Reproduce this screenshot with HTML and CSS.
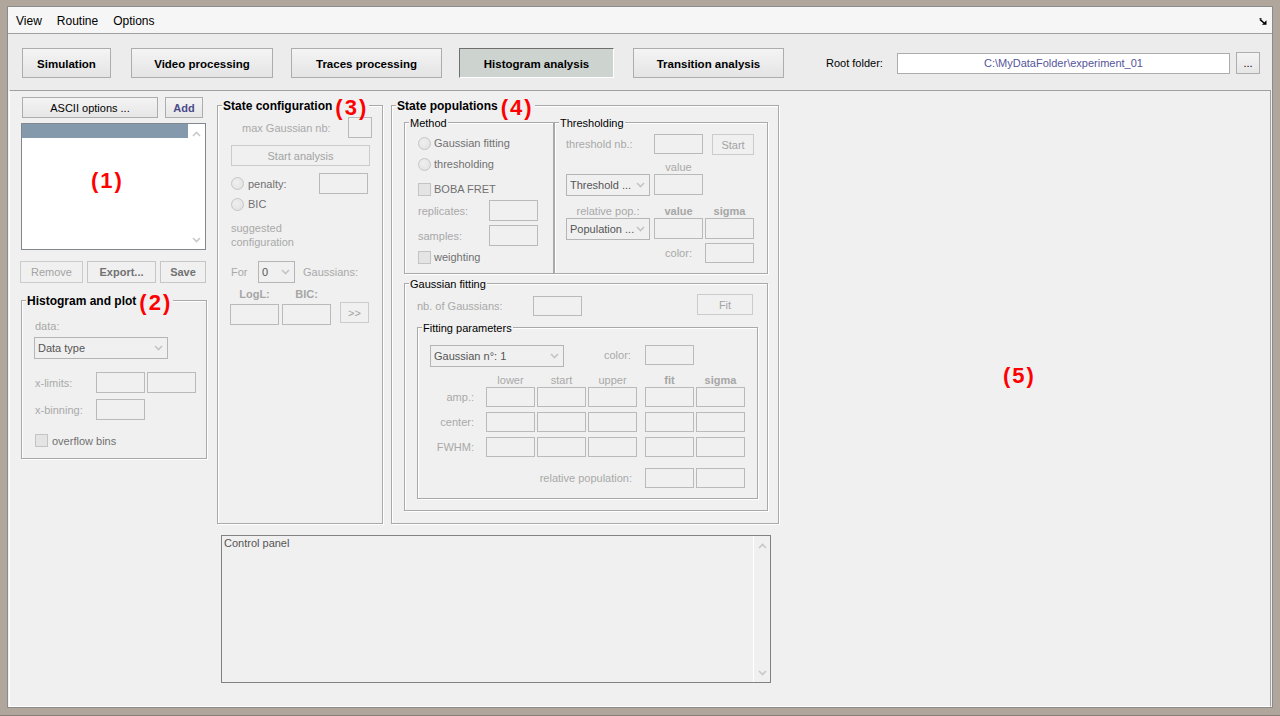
FILE: index.html
```html
<!DOCTYPE html>
<html lang="en">
<head>
<meta charset="utf-8">
<title>Histogram analysis</title>
<link rel="stylesheet" href="styles.css">
</head>
<body>
<div class="window">
  <div class="menubar">
    <span>View</span><span>Routine</span><span>Options</span>
    <svg class="undock" width="8" height="7" viewBox="0 0 8 7"><path d="M0.5 0.8 H2.5" stroke="#000" stroke-width="1.2"/><path d="M1.2 1.6 L5 5" stroke="#000" stroke-width="1.5" fill="none"/><path d="M7.5 2.2 V6.8 H2.9 Z" fill="#000"/></svg>
  </div>

  <div class="toolbar">
    <button class="tab tab-sim">Simulation</button>
    <button class="tab tab-vid">Video processing</button>
    <button class="tab tab-tr">Traces processing</button>
    <button class="tab tab-hist active">Histogram analysis</button>
    <button class="tab tab-trans">Transition analysis</button>
    <span class="root-label">Root folder:</span>
    <div class="root-input">C:\MyDataFolder\experiment_01</div>
    <button class="btn browse">...</button>
  </div>

  <div class="main">
    <div class="col-left">
      <div class="ascii-row">
        <button class="btn ascii-btn">ASCII options ...</button>
        <button class="btn add-btn">Add</button>
      </div>
      <div class="listbox">
        <div class="list-items"><div class="list-sel"></div></div>
        <div class="list-scroll">
          <svg width="9" height="6" viewBox="0 0 9 6"><path d="M1 5l3.5-3.5L8 5" fill="none" stroke="#c8c8c8" stroke-width="1.6"/></svg>
          <svg width="9" height="6" viewBox="0 0 9 6"><path d="M1 1l3.5 3.5L8 1" fill="none" stroke="#c8c8c8" stroke-width="1.6"/></svg>
        </div>
        <span class="mark mark1">(1)</span>
      </div>
      <div class="action-row">
        <button class="btn off rm-btn">Remove</button>
        <button class="btn off-bold exp-btn">Export...</button>
        <button class="btn off-bold save-btn">Save</button>
      </div>

      <div class="grp grp-hist">
        <div class="grp-title bold">Histogram and plot<span class="mark">(2)</span></div>
        <div class="lbl h-data">data:</div>
        <div class="sel h-sel"><span>Data type</span><svg width="9" height="6" viewBox="0 0 9 6"><path d="M1 1l3.5 3.5L8 1" fill="none" stroke="#c4c4c4" stroke-width="1.6"/></svg></div>
        <div class="frow h-xl"><span class="lbl h-lab">x-limits:</span><div class="fld"></div><div class="fld ml2"></div></div>
        <div class="frow h-xb"><span class="lbl h-lab">x-binning:</span><div class="fld"></div></div>
        <div class="frow h-ov"><div class="chk"></div><span class="mid">overflow bins</span></div>
      </div>
    </div>

    <div class="col-right">
      <div class="panels">
        <div class="grp grp-state">
          <div class="grp-title bold">State configuration<span class="mark">(3)</span></div>
          <div class="frow s-max"><span class="lbl">max Gaussian nb:</span><div class="fld"></div></div>
          <button class="btn off s-start">Start analysis</button>
          <div class="frow s-pen"><div class="radio"></div><span class="mid txt">penalty:</span><div class="fld"></div></div>
          <div class="frow s-bic"><div class="radio"></div><span class="mid txt">BIC</span></div>
          <div class="lbl s-sugg">suggested<br>configuration</div>
          <div class="frow s-for"><span class="lbl for">For</span><div class="sel for-sel"><span>0</span><svg width="9" height="6" viewBox="0 0 9 6"><path d="M1 1l3.5 3.5L8 1" fill="none" stroke="#c4c4c4" stroke-width="1.6"/></svg></div><span class="lbl gauss">Gaussians:</span></div>
          <div class="s-head"><span class="hb">LogL:</span><span class="hb ml3">BIC:</span></div>
          <div class="s-res"><div class="fld"></div><div class="fld ml3"></div><button class="btn off s-more">&gt;&gt;</button></div>
        </div>

        <div class="grp grp-pop">
          <div class="grp-title bold">State populations<span class="mark">(4)</span></div>
          <div class="pop-top">
            <div class="grp grp-method">
              <div class="grp-title">Method</div>
              <div class="frow m-r1"><div class="radio"></div><span class="mid txt">Gaussian fitting</span></div>
              <div class="frow m-r2"><div class="radio"></div><span class="mid txt">thresholding</span></div>
              <div class="frow m-cb"><div class="chk"></div><span class="mid txt">BOBA FRET</span></div>
              <div class="frow m-rep"><span class="lbl m-lab">replicates:</span><div class="fld"></div></div>
              <div class="frow m-rep"><span class="lbl m-lab">samples:</span><div class="fld"></div></div>
              <div class="frow m-wt"><div class="chk"></div><span class="mid txt">weighting</span></div>
            </div>
            <div class="grp grp-thr">
              <div class="grp-title">Thresholding</div>
              <div class="frow t-r1"><span class="lbl t-lab">threshold nb.:</span><div class="fld h20"></div><button class="btn off t-start">Start</button></div>
              <div class="t-h1"><span class="lbl cell">value</span></div>
              <div class="frow t-r2"><div class="sel t-sel"><span>Threshold ...</span><svg width="9" height="6" viewBox="0 0 9 6"><path d="M1 1l3.5 3.5L8 1" fill="none" stroke="#c4c4c4" stroke-width="1.6"/></svg></div><div class="fld c2"></div></div>
              <div class="frow t-h2"><span class="lbl c1 center">relative pop.:</span><span class="hb c2 cell">value</span><span class="hb c3 cell">sigma</span></div>
              <div class="frow t-r2"><div class="sel t-sel"><span>Population ...</span><svg width="9" height="6" viewBox="0 0 9 6"><path d="M1 1l3.5 3.5L8 1" fill="none" stroke="#c4c4c4" stroke-width="1.6"/></svg></div><div class="fld c2"></div><div class="fld c3"></div></div>
              <div class="frow t-r4"><span class="lbl cell">color:</span><div class="fld h20 c3"></div></div>
            </div>
          </div>

          <div class="grp grp-gfit">
            <div class="grp-title">Gaussian fitting</div>
            <div class="frow g-r1"><span class="lbl g-lab">nb. of Gaussians:</span><div class="fld h20"></div><button class="btn off g-fit">Fit</button></div>
            <div class="grp grp-fp">
              <div class="grp-title">Fitting parameters</div>
              <div class="frow f-r1"><div class="sel f-sel"><span>Gaussian n°: 1</span><svg width="9" height="6" viewBox="0 0 9 6"><path d="M1 1l3.5 3.5L8 1" fill="none" stroke="#c4c4c4" stroke-width="1.6"/></svg></div><span class="lbl f-col">color:</span><div class="fld h20"></div></div>
              <div class="f-grid">
                <span></span><span class="lbl gh">lower</span><span class="lbl gh">start</span><span class="lbl gh">upper</span><span></span><span class="hb gh">fit</span><span class="hb gh">sigma</span>
                <span class="lbl gl">amp.:</span><div class="fld h20"></div><div class="fld h20"></div><div class="fld h20"></div><span></span><div class="fld h20"></div><div class="fld h20"></div>
                <span class="lbl gl">center:</span><div class="fld h20"></div><div class="fld h20"></div><div class="fld h20"></div><span></span><div class="fld h20"></div><div class="fld h20"></div>
                <span class="lbl gl">FWHM:</span><div class="fld h20"></div><div class="fld h20"></div><div class="fld h20"></div><span></span><div class="fld h20"></div><div class="fld h20"></div>
              </div>
              <div class="frow f-rel"><span class="lbl f-rel-lab">relative population:</span><div class="fld h20 f-rel-a"></div><div class="fld h20 ml2"></div></div>
            </div>
          </div>
        </div>
      </div>

      <div class="console">
        <div class="console-text">Control panel</div>
        <div class="console-scroll">
          <svg width="9" height="6" viewBox="0 0 9 6"><path d="M1 5l3.5-3.5L8 5" fill="none" stroke="#c8c8c8" stroke-width="1.6"/></svg>
          <svg width="9" height="6" viewBox="0 0 9 6"><path d="M1 1l3.5 3.5L8 1" fill="none" stroke="#c8c8c8" stroke-width="1.6"/></svg>
        </div>
      </div>
    </div>

    <div class="plot">
      <span class="mark mark5">(5)</span>
    </div>
  </div>
</div>
</body>
</html>
```

FILE: styles.css
```css
* { box-sizing: border-box; }
html, body { margin: 0; padding: 0; }

body {
  width: 1280px;
  height: 716px;
  overflow: hidden;
  background: #b0a69c;
  padding: 6px 7px 8px 7px;
  font-family: "Liberation Sans", Arial, sans-serif;
  font-size: 11px;
  color: #000;
  box-shadow: inset 0 -1px 0 #857d76;
}

button {
  font-family: inherit;
  font-size: 11px;
  margin: 0;
  padding: 0;
}

.window {
  height: 702px;
  border: 1px solid #8b8b8b;
  background: #f0f0f0;
  display: flex;
  flex-direction: column;
}

/* menu */
.menubar {
  flex: none;
  height: 27px;
  background: #f6f6f6;
  border-bottom: 1px solid #a0a0a0;
  display: flex;
  align-items: center;
  gap: 15px;
  padding: 2px 4px 0 8px;
  font-size: 12px;
}
.undock { margin-left: auto; margin-right: 1px; }

/* toolbar */
.toolbar {
  flex: none;
  height: 56px;
  background: #ececec;
  display: flex;
  align-items: flex-start;
  padding: 14px 0 0 14px;
}
.tab {
  flex: none;
  height: 30px;
  padding-top: 2px;
  border: 1px solid #adadad;
  background: linear-gradient(#f4f4f4, #e4e4e4);
  font-weight: bold;
  font-size: 11.5px;
  color: #000;
}
.tab-sim { width: 89px; }
.tab-vid { width: 142px; margin-left: 20px; }
.tab-tr { width: 151px; margin-left: 18px; }
.tab-hist { width: 155px; margin-left: 17px; }
.tab-trans { width: 151px; margin-left: 19px; }
.tab.active {
  background: #cdd3cf;
  border-color: #6f6f6f #fff #fff #6f6f6f;
}
.root-label { margin: 8px 0 0 42px; line-height: 14px; width: 57px; white-space: nowrap; }
.root-input {
  margin: 5px 0 0 14px;
  width: 333px;
  height: 21px;
  background: #fff;
  border: 1px solid #acacac;
  color: #55559a;
  text-align: center;
  line-height: 19px;
}
.browse { margin: 4px 0 0 6px; width: 24px; height: 22px; }

/* generic controls */
.btn {
  display: flex;
  align-items: center;
  justify-content: center;
  border: 1px solid #adadad;
  background: linear-gradient(#f4f4f4, #e6e6e6);
  color: #000;
  flex: none;
}
.btn.off { border-color: #cbcbcb; background: #f0f0f0; color: #a3a3a3; }
.btn.off-bold { border-color: #c6c6c6; background: #f0f0f0; color: #727272; font-weight: bold; }

.fld {
  flex: none;
  width: 49px;
  height: 21px;
  border: 1px solid #bababa;
  background: #f0f0f0;
}
.fld.h20 { height: 20px; }
.ml2 { margin-left: 2px; }
.ml3 { margin-left: 3px; }

.sel {
  flex: none;
  display: flex;
  align-items: center;
  justify-content: space-between;
  border: 1px solid #b5b5b5;
  background: #f0f0f0;
  color: #555;
  padding: 0 4px 0 3px;
  white-space: nowrap;
}
.radio {
  flex: none;
  width: 13px;
  height: 13px;
  border-radius: 50%;
  border: 1px solid #c6c6c6;
  background: radial-gradient(circle at 40% 40%, #efefef, #e0e0e0);
}
.chk {
  flex: none;
  width: 13px;
  height: 13px;
  border: 1px solid #c4c4c4;
  background: #e4e4e4;
}
.lbl { color: #a9a9a9; line-height: 14px; white-space: nowrap; }
.mid { color: #707070; line-height: 14px; white-space: nowrap; }
.hb { color: #a6a6a6; font-weight: bold; line-height: 14px; white-space: nowrap; }
.txt { margin-left: 3px; }
.frow { display: flex; align-items: center; }
.cell { width: 49px; text-align: center; display: inline-block; }
.center { text-align: center; }

.grp {
  position: relative;
  flex: none;
  border: 1px solid #a9a9a9;
  box-shadow: inset 1px 1px 0 #fff, 1px 1px 0 #fff;
}
.grp-title {
  position: absolute;
  top: -7px;
  left: 4px;
  padding: 0 1px;
  background: #f0f0f0;
  line-height: 14px;
  white-space: nowrap;
}
.grp-title.bold { font-weight: bold; font-size: 12px; }

.mark {
  color: #f00;
  font-weight: bold;
  font-size: 22px;
  line-height: 22px;
  letter-spacing: 2px;
}
.grp-title .mark { line-height: 0; margin-left: 3px; vertical-align: -5px; }

/* main */
.main {
  flex: 1;
  min-height: 0;
  display: flex;
  align-items: flex-start;
  margin: 0 1px;
  border-top: 1px solid #a0a0a0;
  border-left: 1px solid #fff;
  border-right: 1px solid #a0a0a0;
  border-bottom: 1px solid #fff;
  padding-top: 6px;
}

/* left column */
.col-left { flex: none; width: 187px; margin-left: 10px; }
.ascii-row { display: flex; height: 21px; }
.ascii-btn { width: 136px; height: 21px; margin-left: 2px; }
.add-btn { width: 38px; height: 21px; margin-left: 7px; font-weight: bold; color: #4b4b8b; }

.listbox {
  position: relative;
  display: flex;
  margin: 5px 0 0 1px;
  width: 185px;
  height: 127px;
  border: 1px solid #828790;
  background: #fff;
}
.list-items { width: 166px; }
.list-sel { height: 14px; background: #8599ad; }
.list-scroll {
  flex: 1;
  display: flex;
  flex-direction: column;
  justify-content: space-between;
  align-items: center;
  padding: 7px 0 6px;
}
.mark1 { position: absolute; left: 69px; top: 46px; }

.action-row { display: flex; margin-top: 11px; height: 22px; }
.rm-btn { width: 63px; height: 22px; }
.exp-btn { width: 69px; height: 22px; margin-left: 4px; }
.save-btn { width: 46px; height: 22px; margin-left: 4px; }

.grp-hist { margin: 17px 0 0 1px; width: 186px; height: 159px; padding-left: 12px; }
.h-data { margin-top: 18px; padding-left: 1px; }
.h-sel { margin-top: 4px; width: 134px; height: 22px; }
.h-xl { margin-top: 13px; height: 21px; }
.h-lab { width: 62px; padding-left: 1px; }
.h-xb { margin-top: 6px; height: 21px; }
.h-ov { margin-top: 14px; height: 13px; }
.h-ov .chk { margin-left: 1px; }
.h-ov .mid { margin-left: 4px; }

/* right column */
.col-right { flex: none; width: 561px; margin: 8px 0 0 10px; }
.panels { display: flex; height: 419px; }

.grp-state { width: 166px; height: 419px; }
.s-max { margin-top: 11px; height: 21px; padding-left: 24px; }
.s-max .fld { width: 24px; margin-left: auto; margin-right: 10px; }
.s-start { margin: 7px 0 0 13px; width: 139px; height: 21px; }
.s-pen { margin-top: 7px; height: 21px; padding-left: 13px; }
.s-pen .txt { margin-left: 4px; }
.s-pen .fld { margin-left: auto; margin-right: 14px; }
.s-bic { margin-top: 3px; height: 14px; padding-left: 13px; }
.s-bic .txt { margin-left: 4px; }
.s-sugg { margin-top: 10px; padding-left: 13px; }
.s-for { margin-top: 12px; height: 22px; }
.s-for .for { width: 40px; padding-left: 13px; }
.for-sel { width: 37px; height: 22px; }
.s-for .gauss { margin-left: 8px; }
.s-head { display: flex; margin-top: 4px; height: 14px; padding-left: 12px; }
.s-head .hb { width: 49px; text-align: center; }
.s-res { display: flex; align-items: flex-start; margin-top: 3px; height: 21px; padding-left: 12px; }
.s-more { margin: -2px 0 0 9px; width: 29px; height: 21px; }

.grp-pop { width: 388px; height: 419px; margin-left: 8px; }
.pop-top { display: flex; margin: 16px 0 0 12px; }

.grp-method { width: 150px; height: 152px; }
.m-r1 { margin-top: 13px; height: 14px; padding-left: 13px; }
.m-r2 { margin-top: 7px; height: 14px; padding-left: 13px; }
.m-cb { margin-top: 11px; height: 14px; padding-left: 13px; }
.m-rep { margin-top: 4px; height: 21px; padding-left: 13px; }
.m-lab { width: 71px; }
.m-wt { margin-top: 4px; height: 14px; padding-left: 13px; }

.grp-thr { width: 214px; height: 152px; }
.t-r1 { margin-top: 11px; height: 21px; padding-left: 11px; align-items: flex-start; }
.t-lab { width: 88px; line-height: 20px; }
.t-start { margin-left: 9px; width: 42px; height: 21px; }
.t-h1 { margin-top: 5px; height: 14px; padding-left: 99px; }
.t-r2 { height: 22px; padding-left: 11px; align-items: flex-start; }
.t-sel { width: 84px; height: 22px; }
.c1 { width: 84px; }
.c2 { margin-left: 4px; }
.c3 { margin-left: 2px; }
.t-h2 { margin-top: 8px; height: 14px; padding-left: 11px; }
.t-r4 { margin-top: 3px; height: 20px; padding-left: 99px; }
.t-r4 .cell { line-height: 20px; }

.grp-gfit { margin: 9px 0 0 12px; width: 364px; height: 228px; }
.g-r1 { margin-top: 12px; height: 20px; padding-left: 12px; align-items: flex-start; }
.g-lab { width: 116px; line-height: 20px; }
.g-fit { margin: -2px 14px 0 auto; width: 56px; height: 21px; }

.grp-fp { margin: 11px 0 0 12px; width: 341px; height: 172px; }
.f-r1 { margin-top: 17px; height: 22px; padding-left: 12px; align-items: flex-start; }
.f-sel { width: 134px; height: 22px; }
.f-col { margin-left: 40px; width: 41px; line-height: 20px; }
.f-grid {
  margin-top: 6px;
  display: grid;
  grid-template-columns: 66px 49px 49px 49px 4px 49px 49px;
  grid-template-rows: 14px 25px 25px 20px;
  column-gap: 2px;
}
.gh { text-align: center; }
.gl { text-align: right; padding-right: 10px; line-height: 20px; }
.f-rel { margin-top: 11px; height: 20px; }
.f-rel-lab { width: 219px; text-align: right; padding-right: 5px; line-height: 20px; }
.f-rel-a { margin-left: 8px; }

.console {
  margin: 11px 0 0 4px;
  width: 550px;
  height: 148px;
  border: 1px solid #828282;
  background: #f0f0f0;
  display: flex;
}
.console-text { flex: 1; padding-left: 2px; color: #555; line-height: 14px; }
.console-scroll {
  width: 17px;
  border-left: 1px solid #fff;
  display: flex;
  flex-direction: column;
  justify-content: space-between;
  align-items: center;
  padding: 7px 0 6px;
}

/* plot area */
.plot { flex: 1; align-self: stretch; position: relative; }
.mark5 { position: absolute; left: 225px; top: 268px; }
```
